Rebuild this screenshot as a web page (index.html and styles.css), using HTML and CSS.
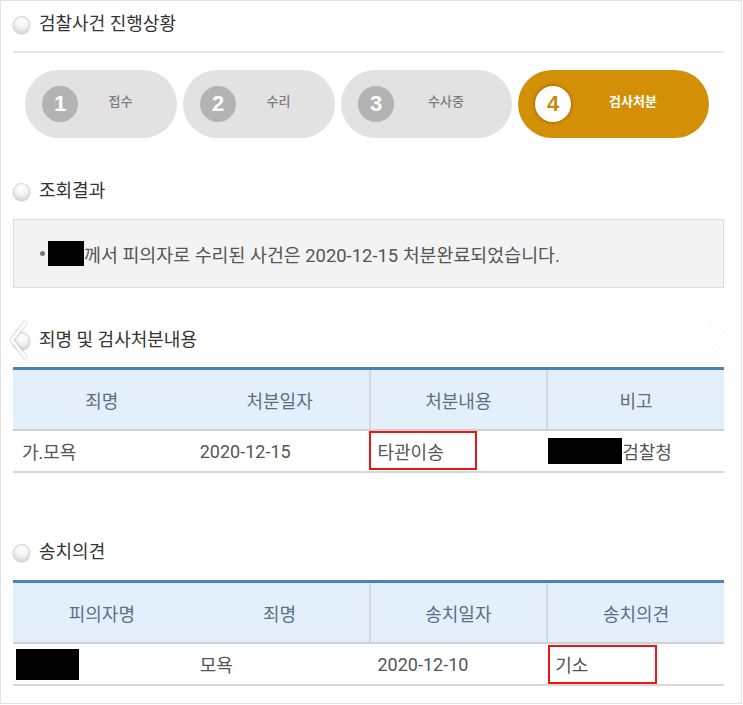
FILE: index.html
```html
<!DOCTYPE html>
<html lang="ko">
<head>
<meta charset="utf-8">
<title>검찰사건 진행상황</title>
<link rel="stylesheet" href="styles.css">
</head>
<body>
<div class="frame">
  <div class="sec-title"><span class="radio"></span><h2>검찰사건 진행상황</h2></div>
  <div class="divider"></div>
  <div class="steps">
    <div class="step s1"><span class="num">1</span><span class="label">접수</span></div>
    <div class="step s2"><span class="num">2</span><span class="label">수리</span></div>
    <div class="step s3"><span class="num">3</span><span class="label">수사중</span></div>
    <div class="step s4 active"><span class="num">4</span><span class="label">검사처분</span></div>
  </div>

  <div class="sec-title t2"><span class="radio"></span><h2>조회결과</h2></div>
  <div class="result"><span class="dot"></span><span class="redact r1"></span>께서 피의자로 수리된 사건은 2020-12-15 처분완료되었습니다.</div>

  <div class="sec-title t3"><span class="radio"></span><h2>죄명 및 검사처분내용</h2></div>
  <div class="grid g1">
    <div class="hd">죄명</div>
    <div class="hd">처분일자</div>
    <div class="hd sep">처분내용</div>
    <div class="hd sep">비고</div>
    <div class="cell">가.모욕</div>
    <div class="cell">2020-12-15</div>
    <div class="cell"><span class="mark m1"></span>타관이송</div>
    <div class="cell"><span class="redact r2"></span>검찰청</div>
  </div>

  <div class="sec-title t4"><span class="radio"></span><h2>송치의견</h2></div>
  <div class="grid g2">
    <div class="hd">피의자명</div>
    <div class="hd">죄명</div>
    <div class="hd sep">송치일자</div>
    <div class="hd sep">송치의견</div>
    <div class="cell"><span class="redact r3"></span></div>
    <div class="cell">모욕</div>
    <div class="cell">2020-12-10</div>
    <div class="cell"><span class="mark m2"></span>기소</div>
  </div>

  <svg class="arrow arrow-left" width="30" height="46" viewBox="0 0 30 46">
    <polyline points="19,5 6,22 19,39" fill="none" stroke="#ffffff" stroke-width="3" stroke-linecap="round" stroke-linejoin="round"/>
  </svg>
  <svg class="arrow arrow-right" width="30" height="46" viewBox="0 0 30 46">
    <polyline points="8,7 24,22 8,37" fill="none" stroke="#ffffff" stroke-width="3" stroke-linecap="round" stroke-linejoin="round"/>
  </svg>
</div>
</body>
</html>
```

FILE: styles.css
```css
html, body {
  margin: 0;
  padding: 0;
  background: #ffffff;
}

body {
  font-family: Roboto, "Noto Sans CJK KR", sans-serif;
  color: #555555;
}

.frame {
  position: relative;
  box-sizing: border-box;
  width: 742px;
  height: 704px;
  border: 1px solid #e2e2e2;
  padding: 7px 17px 0 12px;
}

/* section headings */
.sec-title {
  display: flex;
  align-items: center;
  height: 32px;
  gap: 9px;
}

.sec-title h2 {
  margin: 0;
  font-size: 18px;
  font-weight: 400;
  color: #333333;
  line-height: 1;
}

.radio {
  flex: none;
  box-sizing: border-box;
  width: 17px;
  height: 17px;
  border-radius: 50%;
  border: 1px solid #d4d4d4;
  background: radial-gradient(circle at 50% 30%, #ffffff 0%, #f4f4f4 45%, #d9d9d9 100%);
  box-shadow: 0 1px 2px rgba(0, 0, 0, 0.3);
}

.t2 { margin-top: 37px; }
.t3 { margin-top: 36px; }
.t4 { margin-top: 63px; }

.divider {
  height: 2px;
  background: #e8e8e8;
  margin-top: 11px;
}

/* steps */
.steps {
  display: flex;
  gap: 6px;
  margin-top: 17px;
  padding-left: 12px;
}

.step {
  box-sizing: border-box;
  height: 68px;
  border-radius: 34px;
  background: #e2e2e2;
  display: flex;
  align-items: center;
  padding-left: 17px;
}

.s1, .s2 { width: 152px; }
.s3 { width: 171px; }
.s4 { width: 191px; background: #d38f06; }

.num {
  flex: none;
  width: 36px;
  height: 36px;
  border-radius: 50%;
  background: #b3b3b3;
  color: #ffffff;
  font-family: "Liberation Sans", Arial, sans-serif;
  font-weight: 700;
  font-size: 22px;
  display: flex;
  align-items: center;
  justify-content: center;
}

.s4 .num {
  background: #ffffff;
  color: #c9890a;
  box-shadow: 0 0 3px 1px rgba(130, 80, 0, 0.55);
}

.label {
  flex: 1;
  text-align: center;
  padding-right: 14px;
  padding-bottom: 8px;
  font-size: 13px;
  font-weight: 500;
  color: #7a7a7a;
}

.s4 .label {
  color: #ffffff;
  font-weight: 700;
}

/* result box */
.result {
  box-sizing: border-box;
  margin-top: 12px;
  height: 69px;
  border: 1px solid #dcdcdc;
  background: #f3f3f3;
  display: flex;
  align-items: center;
  padding-left: 26px;
  font-size: 18.4px;
  color: #555555;
  white-space: nowrap;
}

.dot {
  width: 5px;
  height: 5px;
  border-radius: 50%;
  background: #777777;
  margin-right: 3px;
  flex: none;
}

.redact {
  display: inline-block;
  background: #000000;
  flex: none;
}

.r1 { width: 36px; height: 25px; }
.r2 { width: 74px; height: 26px; margin-left: -7px; }
.r3 { width: 63px; height: 31px; margin-left: -6px; }

/* tables */
.grid {
  display: grid;
  grid-template-columns: repeat(4, 1fr);
  border-top: 3px solid #4a84b6;
}

.g1 { margin-top: 11px; }
.g2 { margin-top: 12px; }

.hd {
  height: 59px;
  background: #e3f0fb;
  border-bottom: 2px solid #d0d0d0;
  display: flex;
  align-items: center;
  justify-content: center;
  font-size: 18px;
  color: #5a6f86;
}

.hd.sep {
  border-left: 2px solid #d3d9df;
}

.cell {
  position: relative;
  height: 40px;
  border-bottom: 2px solid #d8d8d8;
  display: flex;
  align-items: center;
  padding-left: 9px;
  font-size: 18px;
  color: #555555;
  white-space: nowrap;
}

/* red annotation boxes */
.mark {
  position: absolute;
  box-sizing: border-box;
  border: 2px solid #e81818;
}

.m1 { left: 0; top: 0; width: 108px; height: 39px; }
.m2 { left: 2px; top: 1px; width: 109px; height: 39px; }

/* carousel arrows */
.arrow {
  position: absolute;
}

.arrow-left {
  left: 5px;
  top: 317px;
  filter: drop-shadow(0 0 1px rgba(0, 0, 0, 0.35));
}

.arrow-right {
  left: 702px;
  top: 315px;
  filter: drop-shadow(0 0 1px rgba(0, 0, 0, 0.08));
}
```
